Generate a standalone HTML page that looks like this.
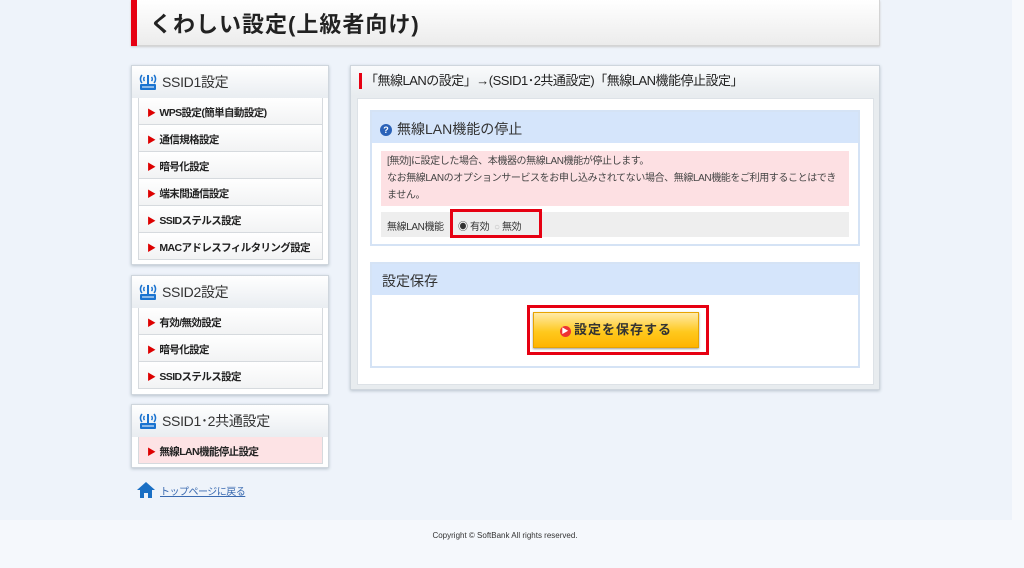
<!DOCTYPE html>
<html><head><meta charset="utf-8"><style>
*{margin:0;padding:0;box-sizing:border-box}
body{width:1024px;height:568px;background:#eef3fa;font-family:"Liberation Sans","Noto Sans CJK JP",sans-serif;color:#333;position:relative;overflow:hidden}
.abs{position:absolute}
.hdr{left:131px;top:0;width:749px;height:46px;background:linear-gradient(#fff,#ececec);border:1px solid #d4d4d4;border-top:none;box-shadow:0 1px 2px #ccc}
.hdr:before{content:"";position:absolute;left:-1px;top:0;width:6px;height:46px;background:#e60012}
.hdr span{position:absolute;left:18px;top:7px;font-size:22px;font-weight:bold;color:#222;letter-spacing:1px}
.box{background:#fff;border:1px solid #cfd6dd;box-shadow:0 1px 3px #b8c2cc;left:131px;width:198px}
.bh{height:32px;background:linear-gradient(#fff,#e9edf1);font-size:14px;padding:6px 0 0 30px;position:relative;color:#333;letter-spacing:-0.3px}
.bh svg{position:absolute;left:6px;top:6px}
.it{margin:0 5px 0 6px;height:27px;border:1px solid #d6dade;border-top:none;background:linear-gradient(#fff,#f2f3f4);font-size:10.5px;font-weight:bold;padding:7px 0 0 8px;color:#222;white-space:nowrap;letter-spacing:-0.6px;overflow:hidden}
.it:first-of-type{border-top:1px solid #d6dade}
.it b{color:#d00;font-size:9px;margin-right:4px}
.it.sel{background:#fde3e5}
.main{left:350px;top:65px;width:530px;height:325px;background:linear-gradient(#fafbfc,#e8ecef 30px,#e8ecef);border:1px solid #cfd6dd;box-shadow:0 1px 3px #b8c2cc}
.mt{position:absolute;left:8px;top:7px;font-size:13px;border-left:3px solid #e60012;padding-left:3px;line-height:16px;color:#222;letter-spacing:-0.5px;white-space:nowrap}
.inner{position:absolute;left:6px;top:32px;width:517px;height:287px;background:#fff;border:1px solid #dde2e7}
.sec{position:absolute;background:#fff;border:2px solid #d5e3f5}
.sh{background:#d5e5fb;height:31px;font-size:14px;padding:7px 0 0 10px;color:#333}
</style></head><body>
<div class="abs hdr"><span>くわしい設定(上級者向け)</span></div>
<div class="abs" style="left:1012px;top:0;width:12px;height:520px;background:#f7f9fc"></div>

<div class="abs box" style="top:65px;height:200px">
<div class="bh"><svg width="20" height="20" viewBox="0 0 20 20"><path d="M4 3a6 6 0 0 0 0 8M6.5 5a3 3 0 0 0 0 4M16 3a6 6 0 0 1 0 8M13.5 5a3 3 0 0 1 0 4" stroke="#1a73d0" stroke-width="1.5" fill="none"/><rect x="9" y="3" width="2" height="10" fill="#1a73d0"/><rect x="2" y="12" width="16" height="6" rx="1" fill="#1a73d0"/><rect x="4" y="14.5" width="12" height="1" fill="#fff"/></svg>SSID1設定</div>
<div class="it"><b>▶</b>WPS設定(簡単自動設定)</div>
<div class="it"><b>▶</b>通信規格設定</div>
<div class="it"><b>▶</b>暗号化設定</div>
<div class="it"><b>▶</b>端末間通信設定</div>
<div class="it"><b>▶</b>SSIDステルス設定</div>
<div class="it"><b>▶</b>MACアドレスフィルタリング設定</div>
</div>
<div class="abs box" style="top:275px;height:120px">
<div class="bh"><svg width="20" height="20" viewBox="0 0 20 20"><path d="M4 3a6 6 0 0 0 0 8M6.5 5a3 3 0 0 0 0 4M16 3a6 6 0 0 1 0 8M13.5 5a3 3 0 0 1 0 4" stroke="#1a73d0" stroke-width="1.5" fill="none"/><rect x="9" y="3" width="2" height="10" fill="#1a73d0"/><rect x="2" y="12" width="16" height="6" rx="1" fill="#1a73d0"/><rect x="4" y="14.5" width="12" height="1" fill="#fff"/></svg>SSID2設定</div>
<div class="it"><b>▶</b>有効/無効設定</div>
<div class="it"><b>▶</b>暗号化設定</div>
<div class="it"><b>▶</b>SSIDステルス設定</div>
</div>
<div class="abs box" style="top:404px;height:64px">
<div class="bh"><svg width="20" height="20" viewBox="0 0 20 20"><path d="M4 3a6 6 0 0 0 0 8M6.5 5a3 3 0 0 0 0 4M16 3a6 6 0 0 1 0 8M13.5 5a3 3 0 0 1 0 4" stroke="#1a73d0" stroke-width="1.5" fill="none"/><rect x="9" y="3" width="2" height="10" fill="#1a73d0"/><rect x="2" y="12" width="16" height="6" rx="1" fill="#1a73d0"/><rect x="4" y="14.5" width="12" height="1" fill="#fff"/></svg>SSID1･2共通設定</div>
<div class="it sel"><b>▶</b>無線LAN機能停止設定</div>
</div>
<div class="abs" style="left:136px;top:481px;font-size:10px;color:#3a6ab0;text-decoration:underline;display:flex;align-items:center;letter-spacing:-0.5px"><svg width="20" height="18" viewBox="0 0 20 18" style="margin-right:4px"><path d="M10 1L1 9h3v8h4v-5h4v5h4V9h3z" fill="#1a6fc4"/></svg>トップページに戻る</div>

<div class="abs main">
<div class="mt">「無線LANの設定」→(SSID1･2共通設定)「無線LAN機能停止設定」</div>
<div class="inner">
<div class="sec" style="left:12px;top:11px;width:490px;height:136px">
<div class="sh" style="padding-left:8px"><span style="display:inline-block;width:12px;height:12px;border-radius:50%;background:#2a62b8;color:#fff;font-size:9px;text-align:center;line-height:12px;font-weight:bold;margin-right:5px;vertical-align:1px">?</span>無線LAN機能の停止</div>
<div style="margin:8px 9px 0 9px;background:#fde0e3;height:55px;font-size:10px;line-height:17px;padding:2px 6px;color:#444;letter-spacing:-0.4px">[無効]に設定した場合、本機器の無線LAN機能が停止します。<br>なお無線LANのオプションサービスをお申し込みされてない場合、無線LAN機能をご利用することはできません。</div>
<div style="margin:6px 9px 0 9px;background:#eeeeee;height:25px;font-size:10px;padding:6px 6px;color:#333;position:relative;letter-spacing:-0.4px">無線LAN機能
<span style="position:absolute;left:69px;top:-3px;width:92px;height:29px;border:3px solid #e60012;padding:6px 0 0 5px">◉ 有効&nbsp; <span style="color:#bbb">○</span> 無効</span></div>
</div>
<div class="sec" style="left:12px;top:163px;width:490px;height:106px">
<div class="sh">設定保存</div>
<div style="position:absolute;left:155px;top:41px;width:182px;height:50px;border:3px solid #e60012">
<div style="position:absolute;left:3px;top:4px;width:166px;height:36px;background:linear-gradient(#ffeaa8,#ffc91e 55%,#ffb400);border:1px solid #e8a400;box-shadow:0 1px 2px #999;font-size:13px;font-weight:bold;text-align:center;line-height:34px;letter-spacing:1px;color:#333"><span style="display:inline-block;width:11px;height:11px;border-radius:50%;background:#e33;color:#fff;font-size:7px;line-height:11px;vertical-align:1px;margin-right:3px">▶</span>設定を保存する</div>
</div>
</div>
</div>
</div>
<div class="abs" style="left:0;top:520px;width:1024px;height:48px;background:#f5f8fc"></div>
<div class="abs" style="left:0;top:531px;width:1010px;text-align:center;font-size:8px;color:#333">Copyright © SoftBank All rights reserved.</div>
</body></html>
